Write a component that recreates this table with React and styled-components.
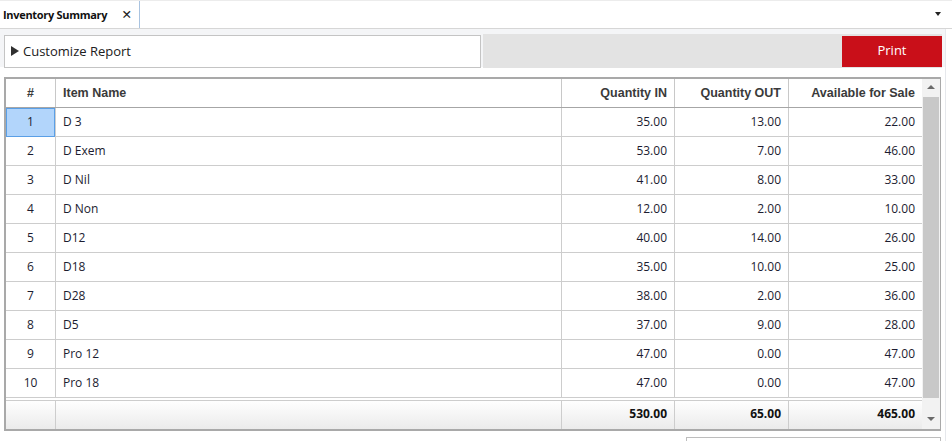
import React from "react";
import styled, { createGlobalStyle } from "styled-components";

const GlobalStyle = createGlobalStyle`
  html, body {
    margin: 0;
    padding: 0;
    background: #ffffff;
    font-family: "Open Sans", "Liberation Sans", sans-serif;
    color: #1e1e2a;
  }
`;

const rows = [
  { id: 1, name: "D 3", qin: 35, qout: 13, avail: 22 },
  { id: 2, name: "D Exem", qin: 53, qout: 7, avail: 46 },
  { id: 3, name: "D Nil", qin: 41, qout: 8, avail: 33 },
  { id: 4, name: "D Non", qin: 12, qout: 2, avail: 10 },
  { id: 5, name: "D12", qin: 40, qout: 14, avail: 26 },
  { id: 6, name: "D18", qin: 35, qout: 10, avail: 25 },
  { id: 7, name: "D28", qin: 38, qout: 2, avail: 36 },
  { id: 8, name: "D5", qin: 37, qout: 9, avail: 28 },
  { id: 9, name: "Pro 12", qin: 47, qout: 0, avail: 47 },
  { id: 10, name: "Pro 18", qin: 47, qout: 0, avail: 47 },
];

const totals = { qin: 530, qout: 65, avail: 465 };

const fmt = (n) => n.toFixed(2);

const App = () => {
  return (
    <Page>
      <GlobalStyle />
      <TabBar>
        <Tab>
          <TabTitle>Inventory Summary</TabTitle>
          <CloseX>✕</CloseX>
        </Tab>
        <TabSpacer />
        <Caret />
      </TabBar>

      <Content>
        <Toolbar>
          <CustomizeBox>
            <Arrow />
            Customize Report
          </CustomizeBox>
          <ActionBar>
            <PrintBtn>Print</PrintBtn>
          </ActionBar>
        </Toolbar>

        <Grid>
          <GridBody>
            <HeadRow>
              <HeadCell $align="center">#</HeadCell>
              <HeadCell>Item Name</HeadCell>
              <HeadCell $align="right">Quantity IN</HeadCell>
              <HeadCell $align="right">Quantity OUT</HeadCell>
              <HeadCell $align="right" $last>
                Available for Sale
              </HeadCell>
            </HeadRow>
            {rows.map((r) => (
              <Row key={r.id}>
                <Cell $align="center" $selected={r.id === 1}>
                  {r.id}
                </Cell>
                <Cell>{r.name}</Cell>
                <Cell $align="right">{fmt(r.qin)}</Cell>
                <Cell $align="right">{fmt(r.qout)}</Cell>
                <Cell $align="right" $last>
                  {fmt(r.avail)}
                </Cell>
              </Row>
            ))}
            <FootRow>
              <FootCell />
              <FootCell />
              <FootCell $align="right">{fmt(totals.qin)}</FootCell>
              <FootCell $align="right">{fmt(totals.qout)}</FootCell>
              <FootCell $align="right" $last>
                {fmt(totals.avail)}
              </FootCell>
            </FootRow>
          </GridBody>
          <ScrollBar>
            <ScrollArrow $up />
            <Thumb />
            <ScrollArrow />
          </ScrollBar>
        </Grid>

        <BottomRow>
          <BottomBox />
        </BottomRow>
      </Content>
    </Page>
  );
};

export default App;

const Page = styled.div`
  width: 952px;
  height: 441px;
  overflow: hidden;
  background: #ffffff;
`;

const TabBar = styled.div`
  display: flex;
  align-items: stretch;
  height: 27px;
  border-top: 1px solid #ececec;
  border-bottom: 1px solid #d6d6d6;
  background: #ffffff;
`;

const Tab = styled.div`
  width: 140px;
  box-sizing: border-box;
  display: flex;
  align-items: center;
  justify-content: space-between;
  padding: 0 7px 0 3px;
  border-right: 1px solid #a9c3e0;
  background: #ffffff;
`;

const TabTitle = styled.span`
  font-family: "Open Sans", "Liberation Sans", sans-serif;
  font-weight: 700;
  font-size: 11px;
  letter-spacing: -0.3px;
  color: #111;
`;

const CloseX = styled.span`
  font-family: "DejaVu Sans", sans-serif;
  font-weight: 700;
  font-size: 12.5px;
  color: #222;
`;

const TabSpacer = styled.div`
  flex: 1;
`;

const Caret = styled.div`
  align-self: center;
  width: 0;
  height: 0;
  margin: 0 11px 2px 0;
  border-left: 3.5px solid transparent;
  border-right: 3.5px solid transparent;
  border-top: 4px solid #222;
`;

const Content = styled.div`
  width: 945px;
  height: 413px;
  border-right: 1px solid #e6e8ec;
  background: #ffffff;
`;

const Toolbar = styled.div`
  display: flex;
  align-items: stretch;
  height: 34px;
  padding: 5px 3px 0 4px;
  background: linear-gradient(#f4f5f7, #f4f5f7 38px, #ffffff 38px);
`;

const CustomizeBox = styled.div`
  width: 477px;
  box-sizing: border-box;
  height: 33px;
  margin-top: 1px;
  display: flex;
  align-items: center;
  gap: 4px;
  padding: 0 0 1px 6px;
  background: #ffffff;
  border: 1px solid #c4c4c4;
  font-size: 13px;
  color: #202020;
`;

const Arrow = styled.span`
  width: 0;
  height: 0;
  border-top: 5px solid transparent;
  border-bottom: 5px solid transparent;
  border-left: 8px solid #303030;
`;

const ActionBar = styled.div`
  flex: 1;
  margin-left: 2px;
  display: flex;
  justify-content: flex-end;
  align-items: center;
  background: #e3e3e3;
  height: 34px;
`;

const PrintBtn = styled.button`
  width: 100px;
  height: 31px;
  border: none;
  background: #c90f19;
  color: #ffffff;
  font-family: "Open Sans", "Liberation Sans", sans-serif;
  font-size: 13px;
  padding: 0 0 2px;
`;

const Grid = styled.div`
  display: flex;
  margin: 9px 0 0 4px;
  width: 937px;
  box-sizing: border-box;
  border: 2px solid #a9a9a9;
  background: #ffffff;
`;

const GridBody = styled.div`
  flex: 1;
  display: flex;
  flex-direction: column;
`;

const cols = "50px 506px 113px 114px 133px";

const HeadRow = styled.div`
  display: grid;
  grid-template-columns: ${cols};
  height: 28px;
  border-bottom: 1px solid #a6a6a6;
`;

const HeadCell = styled.div`
  display: flex;
  align-items: center;
  justify-content: ${(p) =>
    p.$align === "center" ? "center" : p.$align === "right" ? "flex-end" : "flex-start"};
  padding: 0 7px;
  border-right: ${(p) => (p.$last ? "none" : "1px solid #c8c8c8")};
  font-family: "Liberation Sans", Arial, sans-serif;
  font-weight: 700;
  font-size: 12.5px;
  color: #3a3a3a;
`;

const Row = styled.div`
  display: grid;
  grid-template-columns: ${cols};
  height: 29px;
  border-bottom: 1px solid #cdcdcd;
  box-sizing: border-box;
`;

const Cell = styled.div`
  display: flex;
  align-items: center;
  justify-content: ${(p) =>
    p.$align === "center" ? "center" : p.$align === "right" ? "flex-end" : "flex-start"};
  padding: 0 7px 2px;
  border-right: ${(p) => (p.$last ? "none" : "1px solid #cdcdcd")};
  font-size: 12px;
  color: #1c1c30;
  background: ${(p) => (p.$selected ? "#b2d5fb" : "transparent")};
  box-shadow: ${(p) => (p.$selected ? "inset 0 0 0 1px #5a9fe6" : "none")};
  margin-bottom: ${(p) => (p.$selected ? "-1px" : "0")};
`;

const FootRow = styled.div`
  display: grid;
  grid-template-columns: ${cols};
  height: 31px;
  box-sizing: border-box;
  border-top: 2px solid #ffffff;
  box-shadow: inset 0 1px 0 #cdcdcd;
  background: linear-gradient(#ffffff, #ebebeb);
`;

const FootCell = styled.div`
  display: flex;
  align-items: center;
  justify-content: ${(p) => (p.$align === "right" ? "flex-end" : "flex-start")};
  padding: 0 7px 2px;
  border-right: ${(p) => (p.$last ? "none" : "1px solid #cdcdcd")};
  font-size: 12px;
  font-weight: 700;
  color: #111;
`;

const ScrollBar = styled.div`
  width: 17px;
  display: flex;
  flex-direction: column;
  align-items: center;
  background: #f2f2f2;
  padding: 0 1px;
`;

const ScrollArrow = styled.div`
  width: 0;
  height: 0;
  margin: ${(p) => (p.$up ? "6px 0 8px" : "auto 0 8px")};
  border-left: 4px solid transparent;
  border-right: 4px solid transparent;
  ${(p) =>
    p.$up ? "border-bottom: 4px solid #6a6a6a;" : "border-top: 4px solid #6a6a6a;"}
`;

const Thumb = styled.div`
  width: 16px;
  height: 301px;
  background: #c8c8c8;
`;

const BottomRow = styled.div`
  display: flex;
  justify-content: flex-end;
  padding: 6px 4px 0 0;
`;

const BottomBox = styled.div`
  width: 253px;
  height: 10px;
  border: 1px solid #bdbdbd;
  border-bottom: none;
  background: #ffffff;
`;
